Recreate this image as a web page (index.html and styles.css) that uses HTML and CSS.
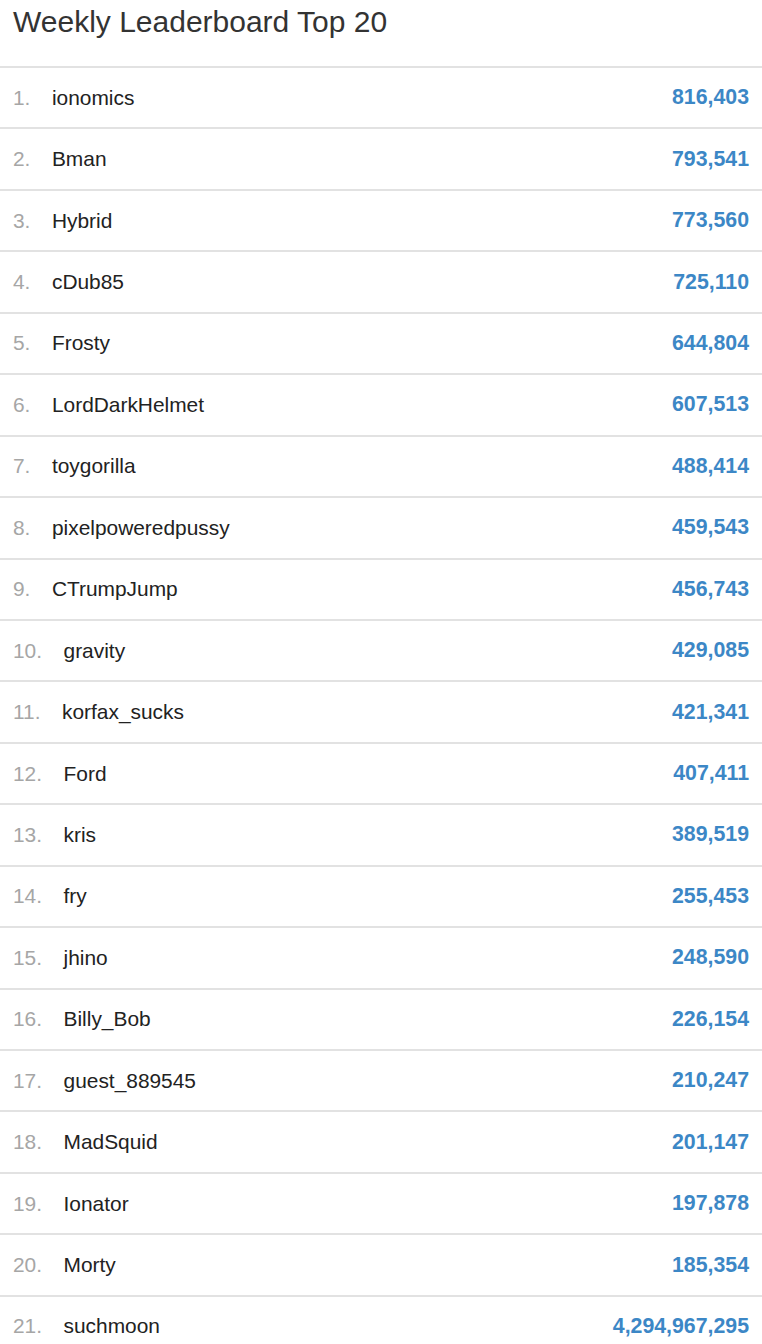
FILE: index.html
```html
<!DOCTYPE html>
<html>
<head>
<meta charset="utf-8">
<link rel="stylesheet" href="styles.css">
</head>
<body>
<div class="board">
  <h3 class="title">Weekly Leaderboard Top 20</h3>
  <ol class="list">
    <li class="row"><span class="rank">1.</span><span class="name">ionomics</span><span class="score">816,403</span></li>
    <li class="row"><span class="rank">2.</span><span class="name">Bman</span><span class="score">793,541</span></li>
    <li class="row"><span class="rank">3.</span><span class="name">Hybrid</span><span class="score">773,560</span></li>
    <li class="row"><span class="rank">4.</span><span class="name">cDub85</span><span class="score">725,110</span></li>
    <li class="row"><span class="rank">5.</span><span class="name">Frosty</span><span class="score">644,804</span></li>
    <li class="row"><span class="rank">6.</span><span class="name">LordDarkHelmet</span><span class="score">607,513</span></li>
    <li class="row"><span class="rank">7.</span><span class="name">toygorilla</span><span class="score">488,414</span></li>
    <li class="row"><span class="rank">8.</span><span class="name">pixelpoweredpussy</span><span class="score">459,543</span></li>
    <li class="row"><span class="rank">9.</span><span class="name">CTrumpJump</span><span class="score">456,743</span></li>
    <li class="row"><span class="rank">10.</span><span class="name">gravity</span><span class="score">429,085</span></li>
    <li class="row"><span class="rank">11.</span><span class="name">korfax_sucks</span><span class="score">421,341</span></li>
    <li class="row"><span class="rank">12.</span><span class="name">Ford</span><span class="score">407,411</span></li>
    <li class="row"><span class="rank">13.</span><span class="name">kris</span><span class="score">389,519</span></li>
    <li class="row"><span class="rank">14.</span><span class="name">fry</span><span class="score">255,453</span></li>
    <li class="row"><span class="rank">15.</span><span class="name">jhino</span><span class="score">248,590</span></li>
    <li class="row"><span class="rank">16.</span><span class="name">Billy_Bob</span><span class="score">226,154</span></li>
    <li class="row"><span class="rank">17.</span><span class="name">guest_889545</span><span class="score">210,247</span></li>
    <li class="row"><span class="rank">18.</span><span class="name">MadSquid</span><span class="score">201,147</span></li>
    <li class="row"><span class="rank">19.</span><span class="name">Ionator</span><span class="score">197,878</span></li>
    <li class="row"><span class="rank">20.</span><span class="name">Morty</span><span class="score">185,354</span></li>
    <li class="row"><span class="rank">21.</span><span class="name">suchmoon</span><span class="score">4,294,967,295</span></li>
  </ol>
</div>
</body>
</html>
```

FILE: styles.css
```css
html, body {
  margin: 0;
  padding: 0;
  background: #ffffff;
}

body {
  font-family: "Liberation Sans", Arial, sans-serif;
  color: #333333;
}

.board {
  width: 762px;
}

.title {
  margin: 0;
  height: 66px;
  box-sizing: border-box;
  padding: 5px 13px 0;
  font-size: 30px;
  font-weight: normal;
  line-height: 1.15;
  color: #333333;
}

.list {
  list-style: none;
  margin: 0;
  padding: 0;
}

.row {
  display: flex;
  align-items: center;
  height: 61.45px;
  box-sizing: border-box;
  border-top: 2px solid #e2e2e2;
  padding: 0 13px;
  font-size: 20.9px;
}

.rank {
  color: #a6a6a6;
  margin-right: 21.5px;
}

.name {
  color: #222222;
  flex: 1;
}

.score {
  color: #3c87c6;
  font-weight: bold;
  font-size: 21.3px;
}
```
